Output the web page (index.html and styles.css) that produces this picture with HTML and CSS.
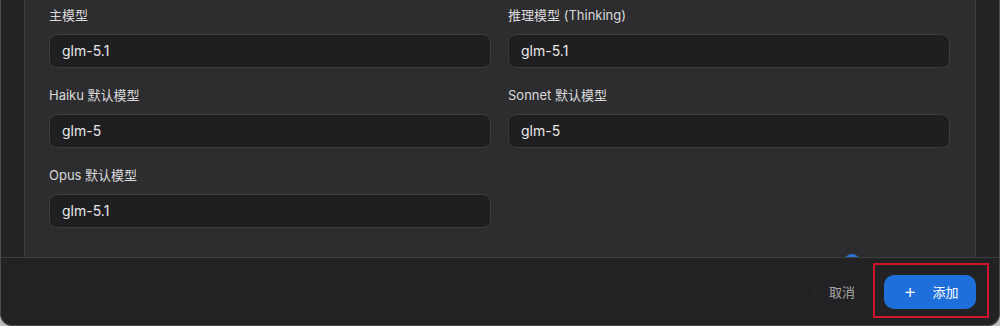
FILE: index.html
```html
<!DOCTYPE html>
<html lang="zh">
<head>
<meta charset="utf-8">
<link rel="stylesheet" href="styles.css">
</head>
<body>
<div class="window">
  <div class="body">
    <div class="panel">
      <div class="grid">
        <div class="field">
          <label class="label">主模型</label>
          <div class="input">glm-5.1</div>
        </div>
        <div class="field">
          <label class="label">推理模型 (Thinking)</label>
          <div class="input">glm-5.1</div>
        </div>
        <div class="field">
          <label class="label">Haiku 默认模型</label>
          <div class="input">glm-5</div>
        </div>
        <div class="field">
          <label class="label">Sonnet 默认模型</label>
          <div class="input">glm-5</div>
        </div>
        <div class="field">
          <label class="label">Opus 默认模型</label>
          <div class="input">glm-5.1</div>
        </div>
      </div>
      <span class="peek"></span>
    </div>
  </div>
  <div class="footer">
    <button class="btn-cancel">取消</button>
    <button class="btn-add"><span class="plus">+</span><span>添加</span></button>
    <span class="highlight"></span>
  </div>
</div>
</body>
</html>
```
FILE: styles.css
```css
* { box-sizing: border-box; }
html, body { margin: 0; padding: 0; }
body {
  width: 1000px;
  height: 326px;
  background: #bdbdbd;
  font-family: "Inter", "Noto Sans CJK SC", sans-serif;
  overflow: hidden;
}
.window {
  width: 1000px;
  height: 326px;
  background: #222224;
  border-radius: 0 0 12px 12px;
  border: 1px solid #4a4a4c;
  border-top: none;
  overflow: hidden;
  display: flex;
  flex-direction: column;
  position: relative;
}
.body {
  height: 257px;
  padding: 0 23px 0 23px;
  background: #232325;
  flex: none;
}
.panel {
  height: 100%;
  background: #2d2d2f;
  border-left: 1px solid #3b3b3d;
  border-right: 1px solid #3b3b3d;
  padding: 6px 24px 0 24px;
  position: relative;
  overflow: hidden;
}
.grid {
  display: grid;
  grid-template-columns: 442px 442px;
  column-gap: 17px;
  row-gap: 18px;
}
.field { display: flex; flex-direction: column; }
.label {
  font-size: 13px;
  line-height: 18px;
  color: #dadadc;
  margin-bottom: 10px;
}
.input {
  height: 34px;
  background: #1f1f21;
  border: 1px solid #3c3c3e;
  border-radius: 8px;
  padding: 0 12px;
  font-size: 14px;
  line-height: 32px;
  color: #e8e8ea;
}
.peek {
  position: absolute;
  left: 819px;
  top: 254px;
  width: 16px;
  height: 16px;
  border-radius: 50%;
  background: #2f72d6;
}
.footer {
  flex: 1;
  border-top: 1px solid #3e3e40;
  display: flex;
  align-items: center;
  justify-content: flex-end;
  padding: 0 23px 0 0;
  gap: 14px;
  position: relative;
}
.btn-cancel {
  height: 32px;
  padding: 0 14px;
  background: transparent;
  border: 1px solid #272729;
  border-radius: 6px;
  color: #a6a6a8;
  font-family: inherit;
  font-size: 13px;
}
.btn-add {
  width: 92px;
  height: 34px;
  background: #1f6fdb;
  border: none;
  border-radius: 10px;
  color: #ffffff;
  font-family: inherit;
  font-size: 13px;
  display: flex;
  align-items: center;
  justify-content: center;
  gap: 16px;
  padding: 0 0 0 2px;
}
.plus {
  font-size: 20px;
  font-weight: 300;
  line-height: 1;
  margin-top: -2px;
}
.highlight {
  position: absolute;
  left: 872px;
  top: 5px;
  width: 116px;
  height: 55px;
  border: 2px solid #d0142a;
  pointer-events: none;
}
```
